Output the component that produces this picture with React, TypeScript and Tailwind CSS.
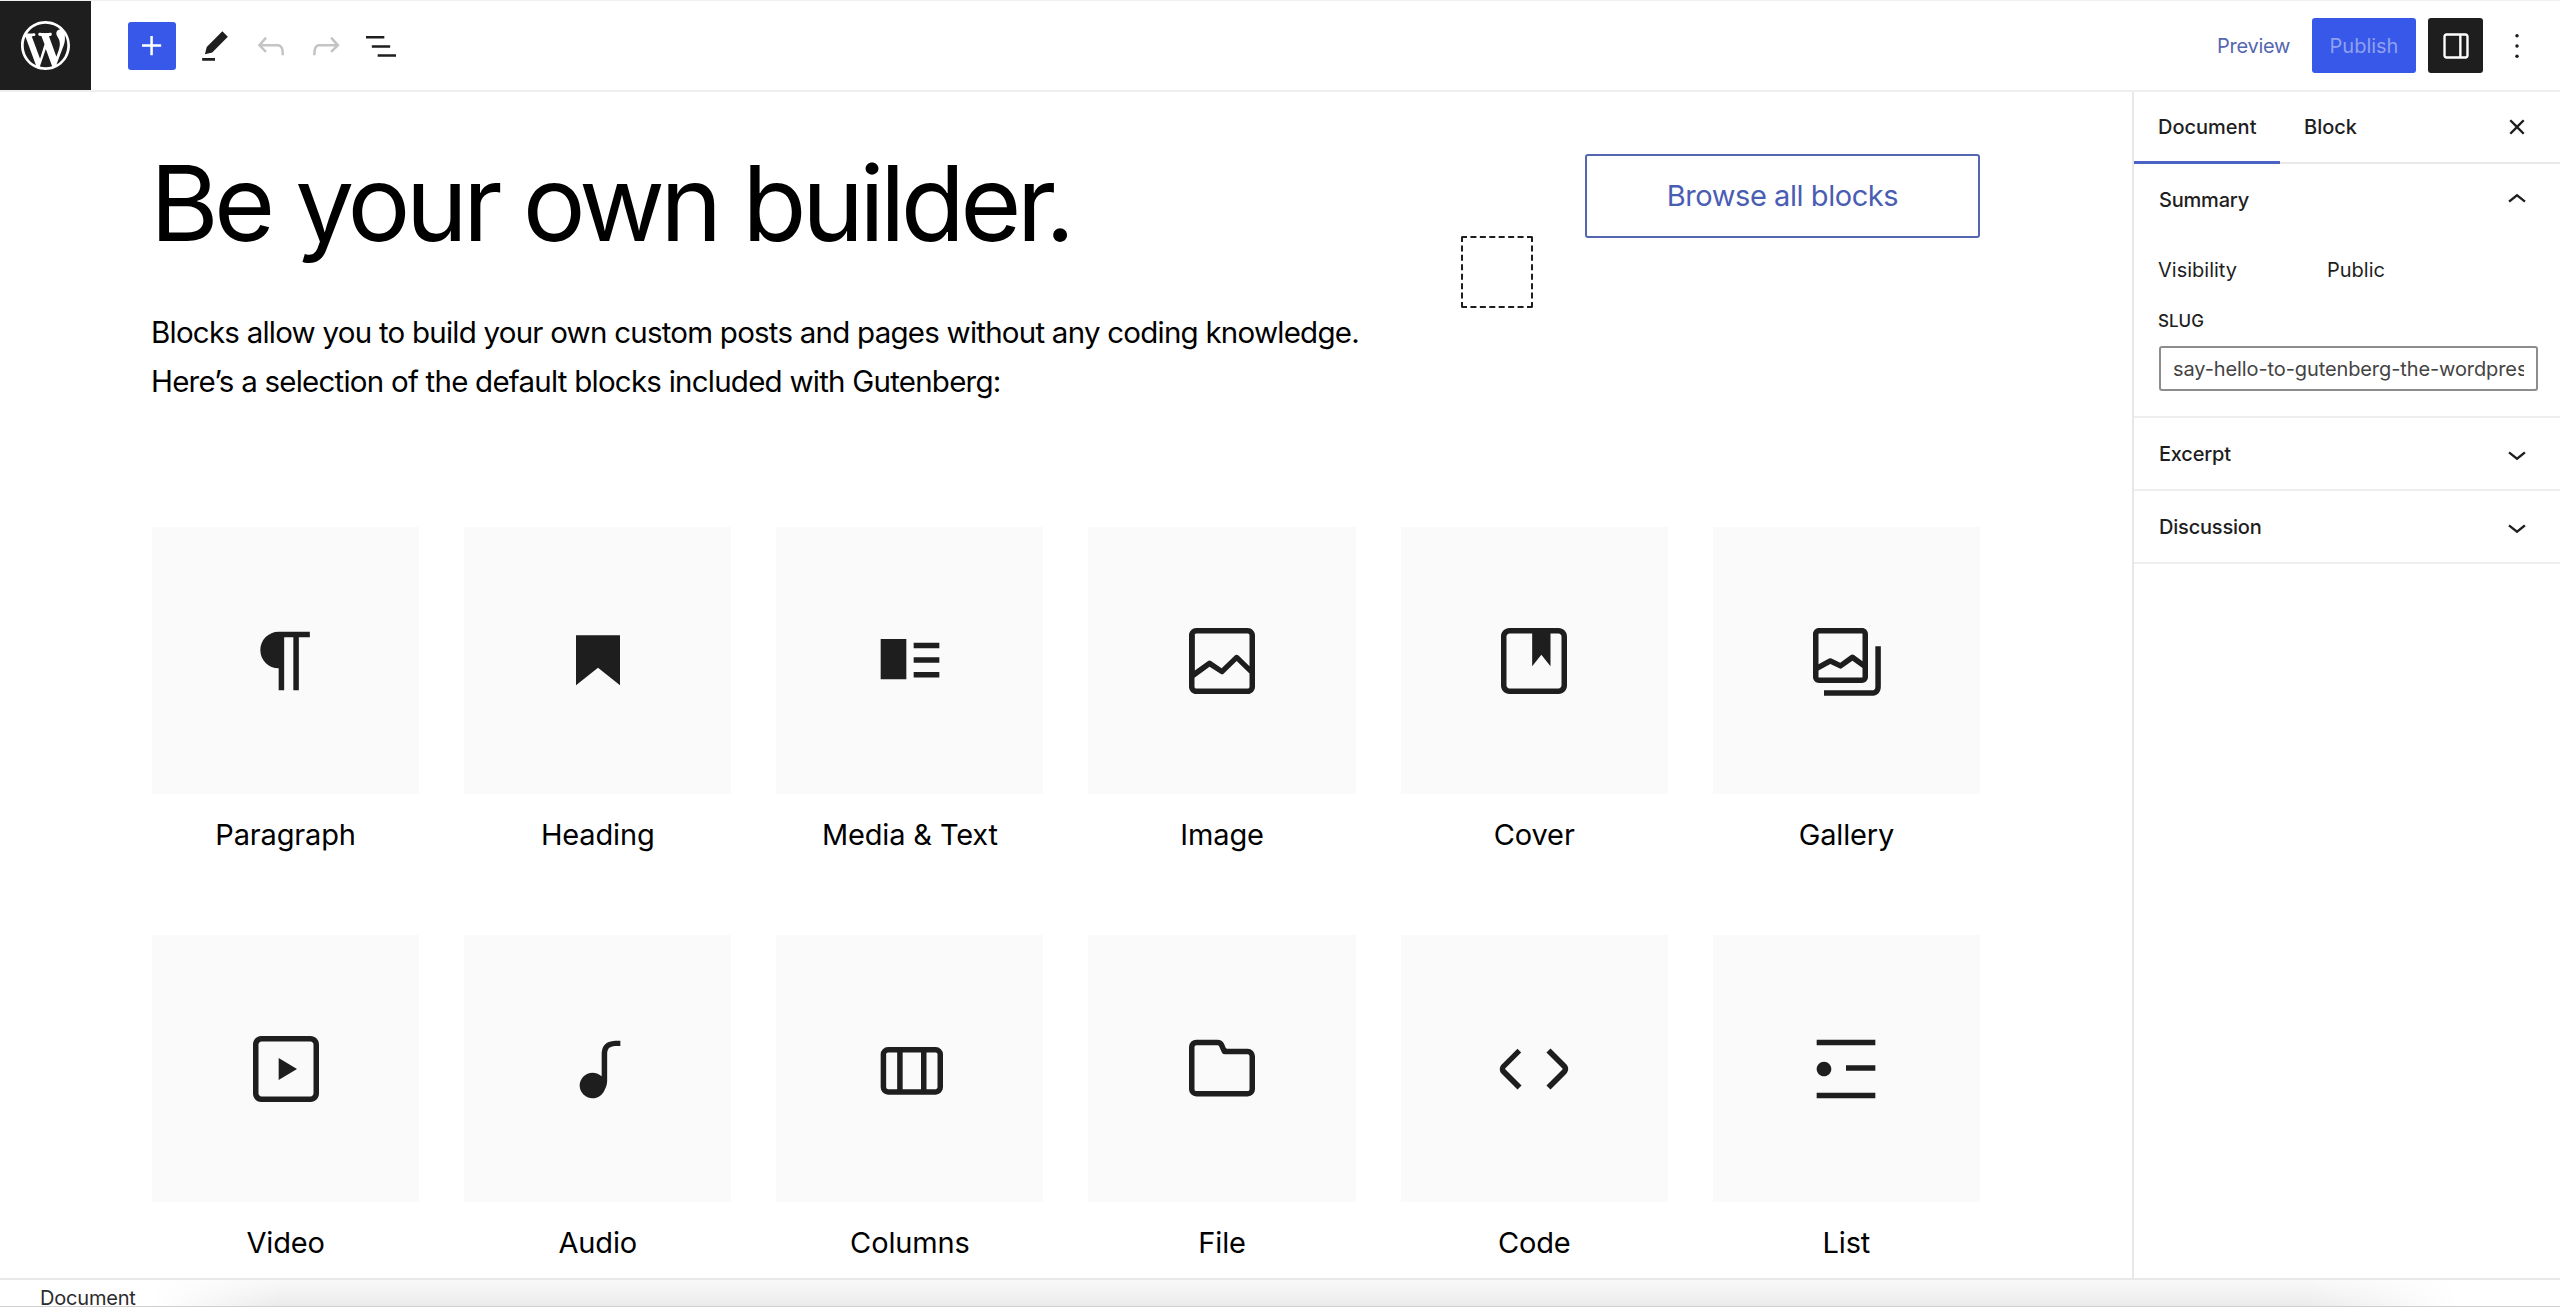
import React from 'react';

const Icon = ({ d, size = 88, className = '' }: { d: string; size?: number; className?: string }) => (
  <svg viewBox="0 0 24 24" width={size} height={size} className={`shrink-0 ${className}`} fill="currentColor">
    <path d={d} fillRule="evenodd" clipRule="evenodd" />
  </svg>
);

const wpLogo =
  'M20 10c0-5.51-4.49-10-10-10C4.48 0 0 4.49 0 10c0 5.52 4.48 10 10 10 5.51 0 10-4.48 10-10zM7.78 15.37L4.37 6.22c.55-.02 1.17-.08 1.17-.08.5-.06.44-1.13-.06-1.11 0 0-1.45.11-2.37.11-.18 0-.37 0-.58-.01C4.12 2.69 6.87 1.11 10 1.11c2.33 0 4.45.87 6.05 2.34-.68-.11-1.65.39-1.65 1.58 0 .74.45 1.36.9 2.1.35.61.55 1.36.55 2.46 0 1.49-1.4 5-1.4 5l-3.03-8.37c.54-.02.82-.17.82-.17.5-.05.44-1.25-.06-1.22 0 0-1.44.12-2.38.12-.87 0-2.33-.12-2.33-.12-.5-.03-.56 1.2-.06 1.22l.92.08 1.26 3.41zM17.41 10c.24-.64.74-1.87.43-4.25.7 1.29 1.05 2.71 1.05 4.25 0 3.29-1.73 6.24-4.4 7.78.97-2.59 1.94-5.2 2.92-7.78zM6.1 18.09C3.12 16.65 1.11 13.53 1.11 10c0-1.3.23-2.48.72-3.59C3.25 10.3 4.67 14.2 6.1 18.09zm4.03-6.63l2.58 6.98c-.86.29-1.76.45-2.71.45-.79 0-1.57-.11-2.29-.33.81-2.38 1.62-4.74 2.42-7.1z';

const blocks = [
  { name: 'Paragraph', d: 'm9.99609 14v-.2251l.00391.0001v6.225h1.5v-14.5h2.5v14.5h1.5v-14.5h3v-1.5h-8.50391c-2.76142 0-5 2.23858-5 5 0 2.7614 2.23858 5 5 5z' },
  { name: 'Heading', d: 'M6 5V18.5911L12 13.8473L18 18.5911V5H6Z' },
  { name: 'Media & Text', d: 'M4 17h7V6H4v11zm9-10v1.5h7V7h-7zm0 5.5h7V11h-7v1.5zm0 4h7V15h-7v1.5z' },
  { name: 'Image', d: 'M19 3H5c-1.1 0-2 .9-2 2v14c0 1.1.9 2 2 2h14c1.1 0 2-.9 2-2V5c0-1.1-.9-2-2-2zM5 4.5h14c.3 0 .5.2.5.5v8.4l-3-2.9c-.3-.3-.8-.3-1 0L11.9 14 9 12c-.3-.2-.6-.2-.8 0l-3.6 2.6V5c-.1-.3.1-.5.4-.5zm14 15H5c-.3 0-.5-.2-.5-.5v-2.4l4.1-3 3 1.9c.3.2.7.2.9-.1L16 12l3.5 3.4V19c0 .3-.2.5-.5.5z' },
  { name: 'Cover', d: 'M18.7 3H5.3C4 3 3 4 3 5.3v13.4C3 20 4 21 5.3 21h13.4c1.3 0 2.3-1 2.3-2.3V5.3C21 4 20 3 18.7 3zm.8 15.7c0 .4-.4.8-.8.8H5.3c-.4 0-.8-.4-.8-.8V5.3c0-.4.4-.8.8-.8h6.2v8.9l2.5-3.1 2.5 3.1V4.5h2.2c.4 0 .8.4.8.8v13.4z' },
  { name: 'Gallery', d: 'M16.375 4.5H4.625a.125.125 0 0 0-.125.125v8.254l2.859-1.54a.75.75 0 0 1 .68-.016l2.384 1.142 2.89-2.074a.75.75 0 0 1 .874 0l2.313 1.66V4.625a.125.125 0 0 0-.125-.125Zm.125 9.398-2.75-1.975-2.813 2.02a.75.75 0 0 1-.76.067l-2.444-1.17L4.5 14.583v1.792c0 .069.056.125.125.125h11.75a.125.125 0 0 0 .125-.125v-2.477ZM4.625 3C3.728 3 3 3.728 3 4.625v11.75C3 17.273 3.728 18 4.625 18h11.75c.898 0 1.625-.727 1.625-1.625V4.625C18 3.728 17.273 3 16.375 3H4.625ZM20 8v11c0 .69-.31 1-.999 1H6v1.5h13.001c1.52 0 2.499-.982 2.499-2.5V8H20Z' },
  { name: 'Video', d: 'M18.7 3H5.3C4 3 3 4 3 5.3v13.4C3 20 4 21 5.3 21h13.4c1.3 0 2.3-1 2.3-2.3V5.3C21 4 20 3 18.7 3zm.8 15.7c0 .4-.4.8-.8.8H5.3c-.4 0-.8-.4-.8-.8V5.3c0-.4.4-.8.8-.8h13.4c.4 0 .8.4.8.8v13.4zM10 15l5-3-5-3v6z' },
  { name: 'Audio', d: 'M17.7 4.3c-1.2 0-2.8 0-3.8 1-.6.6-.9 1.5-.9 2.6V14c-.6-.6-1.5-1-2.5-1C8.6 13 7 14.6 7 16.5S8.6 20 10.5 20c1.5 0 2.8-1 3.3-2.3.5-.8.7-1.8.7-2.5V7.9c0-.7.2-1.2.5-1.6.6-.6 1.8-.6 2.8-.6h.3V4.3h-.4z' },
  { name: 'Columns', d: 'M15 7.5h-5v10h5v-10Zm1.5 0v10H19a.5.5 0 0 0 .5-.5V8a.5.5 0 0 0-.5-.5h-2.5ZM6 7.5h2.5v10H6a.5.5 0 0 1-.5-.5V8a.5.5 0 0 1 .5-.5ZM6 6h13a2 2 0 0 1 2 2v9a2 2 0 0 1-2 2H6a2 2 0 0 1-2-2V8a2 2 0 0 1 2-2Z' },
  { name: 'File', d: 'M12.848 8a1 1 0 0 1-.914-.594l-.723-1.63a.5.5 0 0 0-.447-.276H5a.5.5 0 0 0-.5.5v11.5a.5.5 0 0 0 .5.5h14a.5.5 0 0 0 .5-.5v-9A.5.5 0 0 0 19 8h-6.152Zm.612-1.5a.5.5 0 0 1-.462-.31l-.445-1.084A2 2 0 0 0 10.763 4H5a2 2 0 0 0-2 2v11.5a2 2 0 0 0 2 2h14a2 2 0 0 0 2-2v-9a2 2 0 0 0-2-2h-5.54Z' },
  { name: 'Code', d: 'M20.8 10.7l-4.3-4.3-1.1 1.1 4.3 4.3c.1.1.1.3 0 .4l-4.3 4.3 1.1 1.1 4.3-4.3c.7-.8.7-1.9 0-2.6zM4.2 11.8l4.3-4.3-1-1-4.3 4.3c-.7.7-.7 1.8 0 2.5l4.3 4.3 1.1-1.1-4.3-4.3c-.2-.1-.2-.3-.1-.4z' },
  { name: 'List', d: 'M4 4v1.5h16V4H4zm8 8.5h8V11h-8v1.5zM4 20h16v-1.5H4V20zm4-8c0-1.1-.9-2-2-2s-2 .9-2 2 .9 2 2 2 2-.9 2-2z' },
];

const PanelRow = ({ title, open = false, tall = false }: { title: string; open?: boolean; tall?: boolean }) => (
  <div className={`${tall ? 'h-[72px]' : 'h-[71px]'} flex items-center justify-between pl-[25px] pr-[24px]`}>
    <span className="font-medium tracking-[-0.01em] text-[#1e1e1e]">{title}</span>
    <Icon
      size={38}
      d={open ? 'M6.5 12.4L12 8l5.5 4.4-.9 1.2L12 10l-4.5 3.6-1-1.2z' : 'M17.5 11.6L12 16l-5.5-4.4.9-1.2L12 14l4.5-3.6 1 1.2z'}
    />
  </div>
);

export default function App() {
  return (
    <div className="h-screen flex flex-col overflow-hidden bg-white text-[#1e1e1e] [font-family:Inter,sans-serif]">
      {/* TOP BAR */}
      <header className="h-[92px] shrink-0 flex items-center border-t border-t-[#f0f0f0] border-b-2 border-b-[#eeeeee]">
        <div className="w-[91px] h-full bg-[#1e1e1e] flex items-center justify-center">
          <svg viewBox="0 0 20 20" width={49} height={49} fill="#ffffff">
            <path d={wpLogo} />
          </svg>
        </div>
        <div className="flex items-center ml-[37px]">
          <button className="w-[48px] h-[48px] rounded-[3px] bg-[#3858e9] text-white flex items-center justify-center">
            <Icon size={40} d="M11 12.5V17.5H12.5V12.5H17.5V11H12.5V6H11V11H6V12.5H11Z" />
          </button>
          <Icon size={44} className="ml-[17px]" d="m19 7-3-3-8.5 8.5-1 4 4-1L19 7Zm-7 11.5H5V20h7v-1.5Z" />
          <Icon size={40} className="ml-[14px] text-[#c4c4c4]" d="M18.3 11.7c-.6-.6-1.4-.9-2.3-.9H6.7l2.9-3.3-1.1-1-4.5 5L8.5 16l1-1-2.7-2.7H16c.5 0 .9.2 1.3.5 1 1 1 3.4 1 4.5v.3h1.5v-.2c0-1.5 0-4.3-1.5-5.7z" />
          <Icon size={40} className="ml-[15px] text-[#c4c4c4]" d="M15.6 6.5l-1.1 1 2.9 3.3H8c-.9 0-1.7.3-2.3.9-1.4 1.5-1.4 4.2-1.4 5.7v.2h1.5v-.3c0-1.1 0-3.5 1-4.5.3-.3.7-.5 1.3-.5h9.2L14.5 15l1.1 1.1 4.6-4.6-4.6-5z" />
          <Icon size={40} className="ml-[15px]" d="M3 6h11v1.5H3V6Zm3.5 5.5h11V13h-11v-1.5ZM21 17H10v1.5h11V17Z" />
        </div>
        <div className="ml-auto flex items-center text-[20px]">
          <span className="text-[#5566b0] tracking-[-0.015em]">Preview</span>
          <button className="ml-[22px] w-[104px] h-[55px] rounded-[3px] bg-[#3858e9] text-[#8fa0f0]">Publish</button>
          <button className="ml-[12px] w-[55px] h-[55px] rounded-[3px] bg-[#1e1e1e] text-white flex items-center justify-center">
            <Icon size={38} d="M18 4H6c-1.1 0-2 .9-2 2v12c0 1.1.9 2 2 2h12c1.1 0 2-.9 2-2V6c0-1.1-.9-2-2-2zm-4 14.5H6c-.3 0-.5-.2-.5-.5V6c0-.3.2-.5.5-.5h8v13zm4.5-.5c0 .3-.2.5-.5.5h-2.5v-13H18c.3 0 .5.2.5.5v12z" />
          </button>
          <svg viewBox="0 0 24 24" width={38} height={38} fill="currentColor" className="ml-[15px] mr-[24px] text-[#1e1e1e]">
            <circle cx="12" cy="5.5" r="1.1" />
            <circle cx="12" cy="12" r="1.1" />
            <circle cx="12" cy="18.5" r="1.1" />
          </svg>
        </div>
      </header>

      <div className="flex-1 min-h-0 flex">
        {/* CANVAS */}
        <main className="flex-1 min-w-0 overflow-hidden pl-[152px]">
          <div className="w-[1828px] flex justify-between pt-[51px]">
            <div>
              <h1 className="-ml-[2px] text-[105px] leading-[120px] tracking-[-0.045em] text-black">Be your own builder.</h1>
              <p className="-ml-[1px] mt-[45px] text-[29.5px] leading-[49px] tracking-[-0.026em] text-black">
                Blocks allow you to build your own custom posts and pages without any coding knowledge.
                <br />
                Here’s a selection of the default blocks included with Gutenberg:
              </p>
            </div>
            <div className="flex items-start gap-[52px]">
              <div className="mt-[93px] w-[72px] h-[72px] border-2 border-dashed border-[#1e1e1e] rounded-[2px]" />
              <button className="mt-[11px] w-[395px] h-[84px] border-2 border-[#5566b0] rounded-[3px] text-[#4a5db3] text-[29px] tracking-[-0.015em]">
                Browse all blocks
              </button>
            </div>
          </div>

          <div className="mt-[121px] w-[1828px] grid grid-cols-6 gap-x-[45px] gap-y-[76px]">
            {blocks.map((block) => (
              <div key={block.name}>
                <div className="h-[267px] bg-[#fafafa] flex items-center justify-center">
                  <Icon d={block.d} />
                </div>
                <p className="mt-[17px] h-[48px] leading-[48px] text-center text-[29px] tracking-[-0.005em] text-black">{block.name}</p>
              </div>
            ))}
          </div>
        </main>

        {/* SIDEBAR */}
        <aside className="w-[428px] shrink-0 border-l-2 border-l-[#e8e8e8] text-[20px]">
          <div className="h-[72px] flex items-center border-b-2 border-b-[#e8e8e8] pr-[24px]">
            <div className="w-[146px] h-full flex items-center pl-[24px] font-medium relative">
              Document
              <span className="absolute left-0 right-0 -bottom-[2px] h-[3px] bg-[#4a62c4]" />
            </div>
            <span className="ml-[24px] font-medium">Block</span>
            <Icon size={38} className="ml-auto" d="M12 13.06l3.712 3.713 1.061-1.06L13.061 12l3.712-3.712-1.06-1.06L12 10.938 8.288 7.227l-1.061 1.06L10.939 12l-3.712 3.712 1.06 1.061L12 13.061z" />
          </div>

          <div className="border-b-2 border-b-[#eeeeee] pb-[25px]">
            <PanelRow title="Summary" open tall />
            <div className="flex pl-[24px] mt-[21px] leading-[26px]">
              <span className="w-[169px]">Visibility</span>
              <span>Public</span>
            </div>
            <div className="pl-[24px] mt-[26px] text-[17px] font-medium leading-[24px]">SLUG</div>
            <div className="pl-[25px] pr-[22px] mt-[13px]">
              <input
                readOnly
                value="say-hello-to-gutenberg-the-wordpress-editor"
                className="w-full h-[45px] px-[12px] border-2 border-[#8d8d8d] rounded-[3px] text-[20px] tracking-[-0.005em] text-[#444444] outline-none"
              />
            </div>
          </div>
          <div className="border-b-2 border-b-[#eeeeee]">
            <PanelRow title="Excerpt" />
          </div>
          <div className="border-b-2 border-b-[#eeeeee]">
            <PanelRow title="Discussion" />
          </div>
        </aside>
      </div>

      {/* STATUS BAR */}
      <footer className="h-[29px] shrink-0 border-t-2 border-t-[#e8e8e8] border-b border-b-[#d0d0d0] bg-[linear-gradient(to_right,#ffffff_6%,transparent_11%,transparent_90%,#ffffff_96%),linear-gradient(to_bottom,#f9f9f9,#ebebeb)] pl-[40px] pt-[10px] text-[20px] tracking-[-0.01em] leading-[16px] text-[#2c2c2c]">
        Document
      </footer>
    </div>
  );
}
